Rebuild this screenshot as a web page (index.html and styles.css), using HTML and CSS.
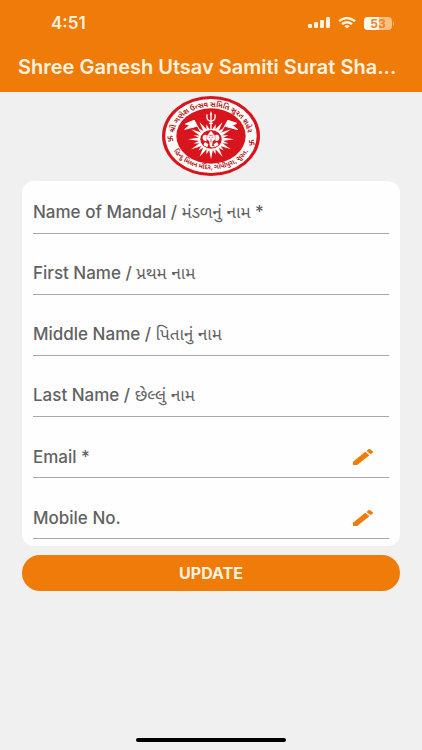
FILE: index.html
```html
<!DOCTYPE html>
<html lang="en">
<head>
    <meta charset="UTF-8">
    <meta name="viewport" content="width=device-width, initial-scale=1.0">
    <title>Shree Ganesh Utsav Samiti Surat</title>
    <link rel="stylesheet" href="styles.css">
</head>
<body>
    <header class="app-header">
        <div class="status-bar">
            <span class="time">4:51</span>
            <div class="status-icons">
                <svg class="signal" width="22" height="12" viewBox="0 0 22 12" fill="#fff3e0">
                    <rect x="0" y="7" width="4" height="4" rx="1"/>
                    <rect x="6" y="5" width="4" height="6" rx="1"/>
                    <rect x="12" y="3" width="4" height="8" rx="1"/>
                    <rect x="18" y="0" width="4" height="11" rx="1"/>
                </svg>
                <svg class="wifi" width="18" height="12" viewBox="0 0 18 12" fill="none" stroke="#fff3e0" stroke-width="2.3">
                    <path d="M1 4.200Q9 -2.200 17 4.200"/>
                    <path d="M4 7.200Q9 3.200 14 7.200"/>
                    <path d="M6.300 9Q9 7 11.700 9L9 11.500Z" fill="#fff3e0" stroke="none"/>
                </svg>
                <svg class="battery" width="30" height="13" viewBox="0 0 30 13">
                    <rect x="0" y="0" width="28" height="13" rx="4" fill="#fbbf80"/>
                    <path d="M4 0H15V13H4Q0 13 0 9V4Q0 0 4 0Z" fill="#fff8ee"/>
                    <path d="M29 4Q30 5 30 6.500Q30 8 29 9Z" fill="#fbbf80"/>
                    <text x="14" y="11" text-anchor="middle" class="battery-text">53</text>
                </svg>
            </div>
        </div>
        <h1>Shree Ganesh Utsav Samiti Surat Sha...</h1>
    </header>

    <main>
        <svg class="logo" width="98" height="80" viewBox="0 0 294 240" role="img" aria-label="Samiti logo">
            <defs>
                <path id="topArc" d="M38 138A111 89 0 1 1 256 138"/>
                <path id="bottomArc" d="M23 137A126 101 0 0 0 271 137"/>
                <path id="longRay" d="M-6 -26L0 -60L6 -26Z"/>
                <path id="shortRay" d="M-5 -26L0 -47L5 -26Z"/>
            </defs>
            <ellipse cx="147" cy="120" rx="147" ry="120" fill="#d8141c"/>
            <ellipse cx="147" cy="120" rx="137" ry="111" fill="#fff"/>
            <ellipse cx="147" cy="120" rx="104" ry="83" fill="#d8141c"/>

            <text class="logo-text"><textPath href="#topArc" startOffset="50%" text-anchor="middle">શ્રી ગણેશ ઉત્સવ સમિતિ સુરત શહેર</textPath></text>
            <text class="logo-text logo-text-small"><textPath href="#bottomArc" startOffset="50%" text-anchor="middle">હિન્દુ મિલન મંદિર, ગોપીપુરા, સુરત.</textPath></text>

            <!-- swastiks on both sides -->
            <g fill="none" stroke="#c4161c" stroke-width="3">
                <path d="M18 121V128H32V135M25 121V135M25 121H32M18 135H25"/>
                <path d="M262 133V140H276V147M269 133V147M269 133H276M262 147H269"/>
            </g>

            <!-- sun rays -->
            <g fill="#fff" transform="translate(147 130) scale(1.15 1)">
                <use href="#longRay" transform="rotate(30)"/>
                <use href="#longRay" transform="rotate(60)"/>
                <use href="#longRay" transform="rotate(90)"/>
                <use href="#longRay" transform="rotate(120)"/>
                <use href="#longRay" transform="rotate(150)"/>
                <use href="#longRay" transform="rotate(180)"/>
                <use href="#longRay" transform="rotate(210)"/>
                <use href="#longRay" transform="rotate(240)"/>
                <use href="#longRay" transform="rotate(270)"/>
                <use href="#longRay" transform="rotate(300)"/>
                <use href="#longRay" transform="rotate(330)"/>
                <use href="#shortRay" transform="rotate(15)"/>
                <use href="#shortRay" transform="rotate(45)"/>
                <use href="#shortRay" transform="rotate(75)"/>
                <use href="#shortRay" transform="rotate(105)"/>
                <use href="#shortRay" transform="rotate(135)"/>
                <use href="#shortRay" transform="rotate(165)"/>
                <use href="#shortRay" transform="rotate(195)"/>
                <use href="#shortRay" transform="rotate(225)"/>
                <use href="#shortRay" transform="rotate(255)"/>
                <use href="#shortRay" transform="rotate(285)"/>
                <use href="#shortRay" transform="rotate(315)"/>
                <use href="#shortRay" transform="rotate(345)"/>
                <circle r="32"/>
                <circle r="28" fill="#d8141c"/>
            </g>

            <!-- trident and flags -->
            <path d="M147 52V100M135 55Q132 75 147 76Q162 75 159 55M141 82H153" fill="none" stroke="#fff" stroke-width="4"/>
            <path d="M147 45L151 56H143Z" fill="#fff"/>
            <g stroke="#fff" stroke-width="3" fill="#fff">
                <path d="M96 72L116 108" fill="none"/>
                <path d="M96 73L70 84L83 88L68 100L104 91Z"/>
                <path d="M198 72L178 108" fill="none"/>
                <path d="M198 73L224 82L211 88L228 101L190 91Z"/>
            </g>

            <!-- Ganesh -->
            <g fill="#fff">
                <path d="M147 104L155 114H139Z"/>
                <path d="M137 116Q147 110 157 116L160 125Q158 135 152 136L151 144Q148 152 155 149L157 153Q142 158 143 144L142 136Q136 134 134 125Z"/>
                <path d="M134 117Q121 114 122 128Q125 137 134 134Z"/>
                <path d="M160 117Q173 114 172 128Q169 137 160 134Z"/>
                <path d="M131 139Q124 140 125 148L136 154L139 145ZM163 139Q170 140 169 148L158 154L155 145Z"/>
            </g>
            <path d="M140 124H145M149 124H154M147 128V139M142 118H152" stroke="#d8141c" stroke-width="2"/>
        </svg>

        <form id="profileForm">
            <div class="card">
                <div class="form-group">
                    <label for="mandal">Name of Mandal / <span lang="gu">મંડળનું નામ</span> *</label>
                    <input type="text" id="mandal" name="mandal">
                </div>
                <div class="form-group">
                    <label for="firstName">First Name / <span lang="gu">પ્રથમ નામ</span></label>
                    <input type="text" id="firstName" name="firstName">
                </div>
                <div class="form-group">
                    <label for="middleName">Middle Name / <span lang="gu">પિતાનું નામ</span></label>
                    <input type="text" id="middleName" name="middleName">
                </div>
                <div class="form-group">
                    <label for="lastName">Last Name / <span lang="gu">છેલ્લું નામ</span></label>
                    <input type="text" id="lastName" name="lastName">
                </div>
                <div class="form-group">
                    <label for="email">Email *</label>
                    <input type="email" id="email" name="email">
                    <button type="button" class="edit-btn" aria-label="Edit email">
                        <svg width="20" height="16" viewBox="3 3 18 18" preserveAspectRatio="none" fill="#ef7b08">
                            <path d="M3 17.250V21h3.750L17.810 9.940l-3.750-3.750L3 17.250zM20.710 7.040a1 1 0 0 0 0-1.410l-2.340-2.340a1 1 0 0 0-1.410 0l-1.830 1.830 3.750 3.750 1.830-1.830z"/>
                        </svg>
                    </button>
                </div>
                <div class="form-group">
                    <label for="mobile">Mobile No.</label>
                    <input type="tel" id="mobile" name="mobile">
                    <button type="button" class="edit-btn" aria-label="Edit mobile number">
                        <svg width="20" height="16" viewBox="3 3 18 18" preserveAspectRatio="none" fill="#ef7b08">
                            <path d="M3 17.250V21h3.750L17.810 9.940l-3.750-3.750L3 17.250zM20.710 7.040a1 1 0 0 0 0-1.410l-2.340-2.340a1 1 0 0 0-1.410 0l-1.830 1.830 3.750 3.750 1.830-1.830z"/>
                        </svg>
                    </button>
                </div>
            </div>
            <button type="submit">UPDATE</button>
        </form>
    </main>

    <div class="home-indicator"></div>
</body>
</html>
```
FILE: styles.css
```css
* {
    box-sizing: border-box;
}

body {
    font-family: Inter, "Noto Sans Gujarati", "Liberation Sans", sans-serif;
    margin: 0;
    background-color: #f0f0f0;
    color: #626262;
    display: flex;
    flex-direction: column;
    min-height: 100vh;
}

.app-header {
    background-color: #ef7b08;
    color: #fff3e0;
    padding: 12px 18px 13px;
}

.status-bar {
    display: flex;
    justify-content: space-between;
    align-items: center;
    padding: 0 10px 0 33px;
    height: 22px;
}

.time {
    font-size: 17px;
    font-weight: 600;
}

.status-icons {
    display: flex;
    align-items: center;
    gap: 8px;
}

.battery {
    overflow: visible;
}

.battery-text {
    font-size: 12px;
    font-weight: 700;
    fill: #e8882c;
}

h1 {
    margin: 21px 0 0;
    font-size: 20px;
    line-height: 24px;
    font-weight: 600;
    white-space: nowrap;
}

main {
    flex: 1;
    padding: 4px 22px 0;
}

.logo {
    display: block;
    margin: 0 auto 5px;
    overflow: visible;
}

.logo-text {
    font-size: 22px;
    font-weight: 700;
    fill: #b51a20;
}

.logo-text-small {
    font-size: 20px;
}

.card {
    background-color: #fefefe;
    border-radius: 12px;
    padding: 12px 11px 7px;
    display: flex;
    flex-direction: column;
    gap: 20px;
}

.form-group {
    display: flex;
    align-items: center;
    height: 41px;
    border-bottom: 1px solid #a8a8a8;
}

.form-group label {
    font-size: 17px;
    font-weight: 500;
    white-space: nowrap;
}

.form-group label span {
    font-weight: 400;
}

.form-group input {
    flex: 1;
    min-width: 0;
    border: none;
    outline: none;
    background: transparent;
    font-family: inherit;
    font-size: 17px;
}

.edit-btn {
    display: flex;
    border: none;
    background: none;
    padding: 0;
    margin-right: 16px;
    cursor: pointer;
}

button[type="submit"] {
    display: block;
    width: 100%;
    height: 36px;
    margin-top: 9px;
    background-color: #ef7b08;
    color: #fff3e0;
    border: none;
    border-radius: 18px;
    font-family: inherit;
    font-size: 16px;
    font-weight: 700;
    cursor: pointer;
}

.home-indicator {
    width: 150px;
    height: 4px;
    margin: 0 auto 8px;
    border-radius: 2px;
    background-color: #000;
}
```
